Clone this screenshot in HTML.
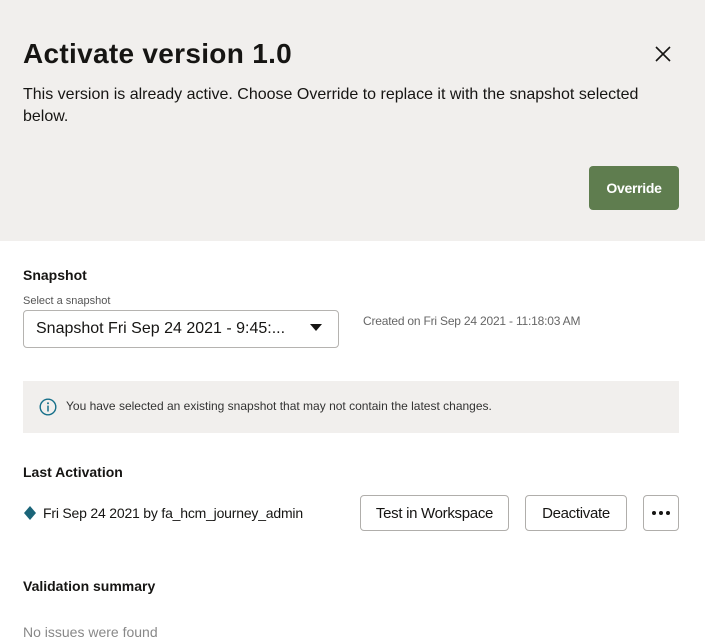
<!DOCTYPE html>
<html><head><meta charset="utf-8"><style>
*{margin:0;padding:0;box-sizing:border-box}
body{width:705px;height:644px;overflow:hidden;background:#fff;font-family:"Liberation Sans",sans-serif;color:#161513;position:relative}
.hdr{position:absolute;left:0;top:0;width:705px;height:241px;background:#f1efed}
.a{position:absolute;white-space:nowrap}
.btn{position:absolute;border:1px solid #b0aeab;border-radius:4px;background:#fff;font-size:14px;font-weight:bold;display:flex;align-items:center;justify-content:center}
</style></head><body>
<div class="hdr"></div>
<div class="a" style="left:23px;top:38px;font-size:28px;font-weight:bold;letter-spacing:0.3px">Activate version 1.0</div>
<svg class="a" style="left:654px;top:45px" width="18" height="18" viewBox="0 0 18 18"><path d="M2 2L16 16M16 2L2 16" stroke="#161513" stroke-width="1.6"/></svg>
<div class="a" style="left:23px;top:84px;font-size:16px;line-height:22px;white-space:normal;width:625px">This version is already active. Choose Override to replace it with the snapshot selected below.</div>
<div class="a" style="left:589px;top:166px;width:90px;height:44px;background:#5f7d4f;border-radius:4px;color:#fff;font-size:14px;font-weight:bold;display:flex;align-items:center;justify-content:center;letter-spacing:-0.3px">Override</div>

<div class="a" style="left:23px;top:267px;font-size:14px;font-weight:bold">Snapshot</div>
<div class="a" style="left:23px;top:295px;font-size:11px;color:#555">Select a snapshot</div>
<div class="a" style="left:23px;top:310px;width:316px;height:38px;border:1px solid #b5b3b0;border-radius:4px"></div>
<div class="a" style="left:36px;top:320px;font-size:16px">Snapshot Fri Sep 24 2021 - 9:45:...</div>
<svg class="a" style="left:310px;top:324px" width="12" height="8" viewBox="0 0 12 8"><path d="M0 0H12L6 7Z" fill="#161513"/></svg>
<div class="a" style="left:363px;top:314px;font-size:12px;color:#666;letter-spacing:-0.2px">Created on Fri Sep 24 2021 - 11:18:03 AM</div>

<div class="a" style="left:23px;top:381px;width:656px;height:52px;background:#f1efed"></div>
<svg class="a" style="left:39px;top:398px" width="18" height="18" viewBox="0 0 18 18"><circle cx="9" cy="9" r="7.8" fill="none" stroke="#17708a" stroke-width="1.4"/><circle cx="9" cy="5.3" r="1" fill="#17708a"/><path d="M9 7.6V13.5" stroke="#17708a" stroke-width="1.5"/></svg>
<div class="a" style="left:66px;top:399px;font-size:12px;color:#333">You have selected an existing snapshot that may not contain the latest changes.</div>

<div class="a" style="left:23px;top:464px;font-size:14px;font-weight:bold">Last Activation</div>
<svg class="a" style="left:23px;top:506px" width="14" height="14" viewBox="0 0 14 14"><path d="M7 0L13 7L7 14L1 7Z" fill="#1a6478"/></svg>
<div class="a" style="left:43px;top:505px;font-size:14px;letter-spacing:-0.2px">Fri Sep 24 2021 by fa_hcm_journey_admin</div>
<div class="btn" style="left:360px;top:495px;width:149px;height:36px;font-weight:normal;font-size:15px;letter-spacing:-0.3px">Test in Workspace</div>
<div class="btn" style="left:525px;top:495px;width:102px;height:36px;font-weight:normal;font-size:15px;letter-spacing:-0.3px">Deactivate</div>
<div class="btn" style="left:643px;top:495px;width:36px;height:36px">
<svg width="20" height="6" viewBox="0 0 20 6"><circle cx="3" cy="3" r="2" fill="#161513"/><circle cx="10" cy="3" r="2" fill="#161513"/><circle cx="17" cy="3" r="2" fill="#161513"/></svg></div>

<div class="a" style="left:23px;top:578px;font-size:14px;font-weight:bold">Validation summary</div>
<div class="a" style="left:23px;top:624px;font-size:14px;color:#888">No issues were found</div>
</body></html>
